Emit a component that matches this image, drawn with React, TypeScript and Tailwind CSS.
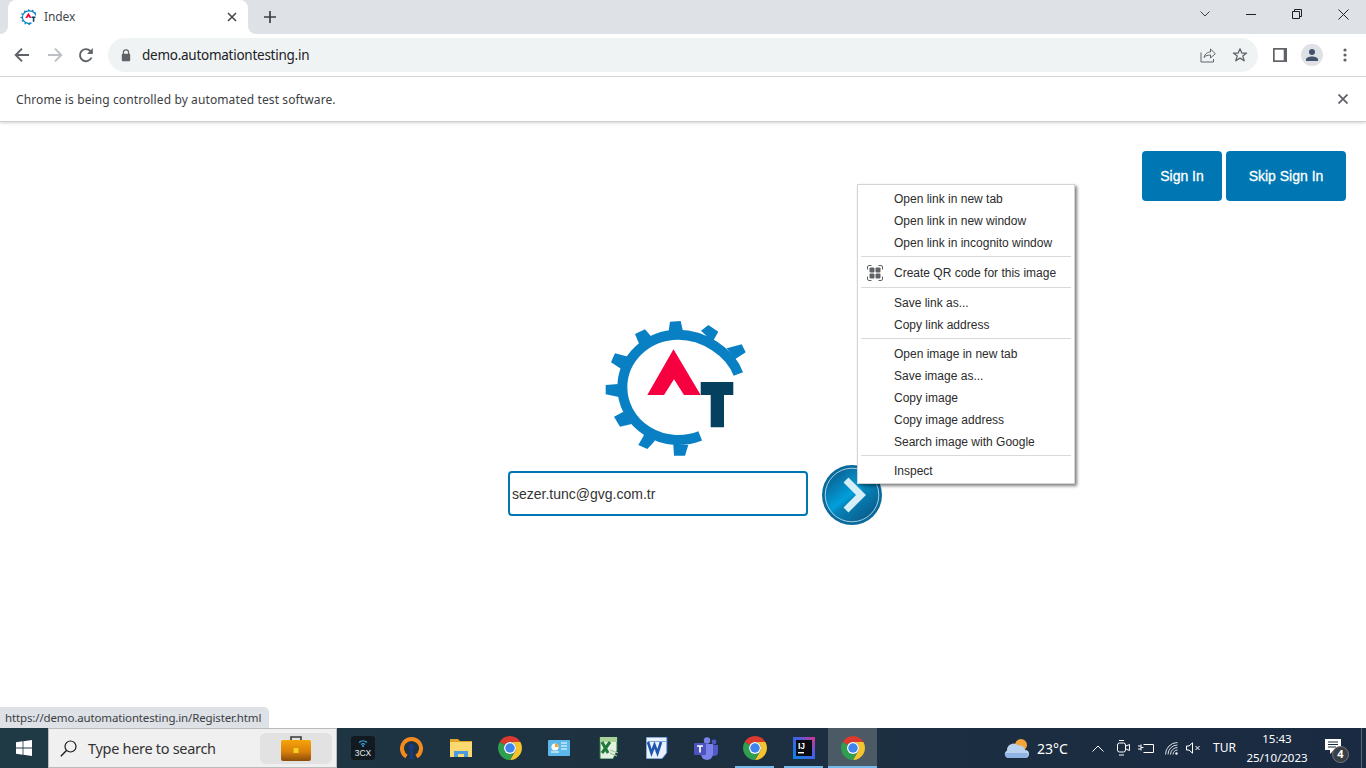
import React from "react";

const teeth = [
  "240,35 272,33 280,68 235,70",
  "333,62 355,45 385,65 368,95",
  "410,115 455,103 467,127 435,148",
  "135,72 165,58 188,85 150,108",
  "75,130 115,140 95,178 63,157",
  "47,225 85,222 90,262 47,253",
  "72,320 100,305 125,342 90,350",
  "145,405 165,370 195,392 172,417",
  "250,405 295,405 285,437 252,437",
];

function Logo({ className, viewBox }: { className: string; viewBox: string }) {
  return (
    <svg className={className} viewBox={viewBox}>
      <g transform="scale(0.33333)">
        <path d="M330.6 377.4A168 158 0 0 1 97 232A168 158 0 0 1 265 74C340 74 420 125 445 192" fill="none" stroke="#0a80c4" strokeWidth="30" />
        {teeth.map((p) => (
          <polygon key={p} points={p} fill="#0a80c4" />
        ))}
      </g>
      <polygon points="83.5,39.3 110.7,85 94,85 84,69.3 74,85 57.3,85" fill="#f6003f" />
      <polygon points="110.7,72 143.3,72 143.3,85 134,85 134,117.3 120.7,117.3 120.7,85 110.7,85" fill="#06405f" />
    </svg>
  );
}

function Chrome({ className = "w-6 h-6" }: { className?: string }) {
  return (
    <svg className={className} viewBox="0 0 48 48">
      <path d="M24 12H44.78A24 24 0 0 0 3.22 12L13.61 18A12 12 0 0 1 24 12Z" fill="#dd3a2e" />
      <path d="M24 12H44.78A24 24 0 0 1 24 48L34.39 30A12 12 0 0 0 24 12Z" fill="#f5c32c" />
      <path d="M3.22 12A24 24 0 0 0 24 48L34.39 30A12 12 0 0 1 13.61 18Z" fill="#2f9e4f" />
      <circle cx="24" cy="24" r="12" fill="#fff" />
      <circle cx="24" cy="24" r="9.5" fill="#3f83ec" />
    </svg>
  );
}

function Slot({ children, open, active }: { children: React.ReactNode; open?: boolean; active?: boolean }) {
  return (
    <div className={`relative w-[49px] h-10 flex items-center justify-center ${active ? "bg-[#4b5a65]" : ""}`}>
      {children}
      {open && <div className={`absolute bottom-0 h-[2px] bg-[#76b9ed] ${active ? "left-0 right-0" : "left-[5px] right-[5px]"}`} />}
    </div>
  );
}

function MenuItem({ children, icon }: { children: React.ReactNode; icon?: boolean }) {
  return (
    <div className="relative h-[22px] leading-[22px] pl-[36px] text-[12px] text-[#2b2b2b] whitespace-nowrap">
      {icon && (
        <svg className="absolute left-[9px] top-[3px] w-[16px] h-[16px]" viewBox="0 0 16 16">
          <path d="M0.5 4.5V2A1.5 1.5 0 0 1 2 0.5H4.5M11.5 0.5H14A1.5 1.5 0 0 1 15.5 2V4.5M15.5 11.5V14A1.5 1.5 0 0 1 14 15.5H11.5M4.5 15.5H2A1.5 1.5 0 0 1 0.5 14V11.5" fill="none" stroke="#5f6368" strokeWidth="1" />
          <rect x="2.5" y="2.5" width="5" height="5" rx="1" fill="#5f6368" />
          <rect x="8.5" y="2.5" width="5" height="5" rx="1" fill="#5f6368" />
          <rect x="2.5" y="8.5" width="5" height="5" rx="1" fill="#5f6368" />
          <rect x="8.5" y="8.5" width="5" height="5" rx="1" fill="#5f6368" />
        </svg>
      )}
      {children}
    </div>
  );
}

function Sep({ className }: { className: string }) {
  return <div className={`ml-[3px] mr-[3px] h-px bg-[#d9d9d9] ${className}`} />;
}

export default function App() {
  return (
    <div className="relative h-screen w-full overflow-hidden flex flex-col bg-white font-['Noto_Sans',sans-serif]">
      {/* Tab strip */}
      <div className="h-[34px] shrink-0 bg-[#dee1e6] flex items-start">
        <div className="relative ml-[8px] w-[240px] h-[34px] bg-white rounded-t-[8px] flex items-center pl-[12px] pr-[10px]">
          <svg className="absolute -left-[8px] bottom-0 w-2 h-2" viewBox="0 0 8 8"><path d="M8 0V8H0A8 8 0 0 0 8 0Z" fill="#fff" /></svg>
          <svg className="absolute -right-[8px] bottom-0 w-2 h-2" viewBox="0 0 8 8"><path d="M0 0V8H8A8 8 0 0 1 0 0Z" fill="#fff" /></svg>
          <Logo className="w-4 h-4 shrink-0" viewBox="12 8 136 136" />
          <span className="ml-2 text-[12px] text-[#45484d] tracking-[-0.01em]">Index</span>
          <svg className="ml-auto mr-[1px] w-[10px] h-[10px]" viewBox="0 0 10 10"><path d="M1 1L9 9M9 1L1 9" stroke="#45484d" strokeWidth="1.6" /></svg>
        </div>
        <svg className="ml-[16px] mt-[11px] w-[12px] h-[12px]" viewBox="0 0 12 12"><path d="M6 0V12M0 6H12" stroke="#3c4043" strokeWidth="1.7" /></svg>
        <div className="ml-auto flex items-center h-[28px] text-[#202124]">
          <svg className="w-[10px] h-[6px] mr-[36px]" viewBox="0 0 10 6"><path d="M0.5 0.5L5 5L9.5 0.5" fill="none" stroke="#3c4043" strokeWidth="1" /></svg>
          <svg className="w-[10px] h-[10px] mr-[36px]" viewBox="0 0 10 10"><path d="M0 5.5H10" stroke="#202124" strokeWidth="1" /></svg>
          <svg className="w-[10px] h-[10px] mr-[36px]" viewBox="0 0 10 10"><path d="M0.5 2.5H7.5V9.5H0.5ZM2.5 2.5V0.5H9.5V7.5H7.5" fill="none" stroke="#202124" strokeWidth="1" /></svg>
          <svg className="w-[11px] h-[11px] mr-[17px]" viewBox="0 0 11 11"><path d="M0.5 0.5L10.5 10.5M10.5 0.5L0.5 10.5" stroke="#202124" strokeWidth="1" /></svg>
        </div>
      </div>

      {/* Toolbar */}
      <div className="h-[42px] shrink-0 bg-white flex items-center border-b border-[#dadce0] box-content">
        <svg className="ml-[14px] w-4 h-4" viewBox="0 0 16 16"><path d="M15 8H2M8 1.7L1.7 8L8 14.3" fill="none" stroke="#5f6368" strokeWidth="1.9" /></svg>
        <svg className="ml-[17px] w-4 h-4" viewBox="0 0 16 16"><path d="M1 8H14M8 1.7L14.3 8L8 14.3" fill="none" stroke="#bcbfc3" strokeWidth="1.9" /></svg>
        <svg className="ml-[15px] w-4 h-4" viewBox="0 0 16 16"><path d="M13.5 10.5A6 6 0 1 1 12.3 4L14 5.6" fill="none" stroke="#5f6368" strokeWidth="1.9" /><path d="M14.8 1V7H9Z" fill="#5f6368" /></svg>
        <div className="ml-[14px] w-[1150px] h-[34px] rounded-full bg-[#f0f3f4] flex items-center pl-[13px] pr-[10px]">
          <svg className="w-[10px] h-[13px]" viewBox="0 0 10 13"><path d="M2.4 5V3.4A2.6 2.6 0 0 1 7.6 3.4V5" fill="none" stroke="#5f6368" strokeWidth="1.2" /><rect x="0.8" y="4.7" width="8.4" height="7.6" rx="1" fill="#5f6368" /></svg>
          <span className="ml-[11px] text-[13.5px] text-[#202124] tracking-[-0.26px]">demo.automationtesting.in</span>
          <svg className="ml-auto w-4 h-4" viewBox="0 0 16 16"><path d="M1 5.5V15H13.5V12M4 10.5C5 6.5 8 5 10.5 5V2L15.3 6.7L10.5 11V8C8 8 5.5 8.6 4 10.5Z" fill="none" stroke="#5f6368" strokeWidth="1" /></svg>
          <svg className="ml-4 w-4 h-4" viewBox="0 0 16 16"><path d="M8 1.8L9.8 6.1H14.6L10.8 9.1L12.2 13.8L8 11.1L3.8 13.8L5.2 9.1L1.4 6.1H6.2Z" fill="none" stroke="#5f6368" strokeWidth="1.3" strokeLinejoin="round" /></svg>
        </div>
        <svg className="ml-[15px] w-[14px] h-[14px]" viewBox="0 0 14 14"><rect width="14" height="14" fill="#5f6368" /><rect x="1.7" y="1.7" width="9" height="10.6" fill="#fff" /></svg>
        <div className="ml-[14px] w-[22px] h-[22px] rounded-full bg-[#dee1e6] flex items-center justify-center">
          <svg className="w-[14px] h-[14px]" viewBox="0 0 14 14"><circle cx="7" cy="4" r="3" fill="#45526b" /><path d="M1 13V11.5C1 9.5 4 8.5 7 8.5S13 9.5 13 11.5V13Z" fill="#45526b" /></svg>
        </div>
        <svg className="ml-[20px] w-1 h-[14px]" viewBox="0 0 4 14"><circle cx="2" cy="2" r="1.6" fill="#5f6368" /><circle cx="2" cy="7" r="1.6" fill="#5f6368" /><circle cx="2" cy="12" r="1.6" fill="#5f6368" /></svg>
      </div>

      {/* Infobar */}
      <div className="relative z-10 h-[45px] shrink-0 bg-white flex items-center pl-[16px] pr-[18px] border-b border-[#d0d0d0] shadow-[0_1px_3px_rgba(0,0,0,0.18)]">
        <span className="pt-[2px] text-[12px] text-[#3c4043] tracking-[0.11px]">Chrome is being controlled by automated test software.</span>
        <svg className="ml-auto w-[10px] h-[10px]" viewBox="0 0 10 10"><path d="M0.5 0.5L9.5 9.5M9.5 0.5L0.5 9.5" stroke="#5f6368" strokeWidth="1.8" /></svg>
      </div>

      {/* Page */}
      <div className="relative flex-1 min-h-0 bg-white font-['Liberation_Sans',sans-serif]">
        <div className="flex justify-end gap-1 pt-[29px] pr-[20px]">
          <div className="w-[80px] h-[50px] rounded-[4px] bg-[#0077b3] flex items-center justify-center text-[14px] text-white [-webkit-text-stroke:0.3px_white]">Sign In</div>
          <div className="w-[120px] h-[50px] rounded-[4px] bg-[#0077b3] flex items-center justify-center text-[14px] text-white [-webkit-text-stroke:0.3px_white]">Skip Sign In</div>
        </div>
        <Logo className="ml-[590px] mt-[109px] w-[170px] h-[155px] block" viewBox="0 0 170 155" />
        <div className="ml-[508px] flex items-start">
          <div className="mt-[6px] w-[300px] h-[45px] rounded-[4px] border-2 border-[#0077b3] flex items-center pl-[2px] pt-[2px] text-[14px] text-[#333333]">sezer.tunc@gvg.com.tr</div>
          <svg className="ml-[14px] w-[60px] h-[60px]" viewBox="0 0 60 60">
            <defs>
              <linearGradient id="orb" x1="0.2" y1="0.15" x2="0.8" y2="0.9">
                <stop offset="0" stopColor="#0a6a9e" />
                <stop offset="0.45" stopColor="#00a0dc" />
                <stop offset="0.55" stopColor="#0583b8" />
                <stop offset="1" stopColor="#0a5f90" />
              </linearGradient>
            </defs>
            <circle cx="30" cy="30" r="30" fill="#0b6a9c" />
            <circle cx="30" cy="30" r="26.8" fill="url(#orb)" stroke="#cfe8f3" strokeWidth="0.8" />
            <path d="M24 15L39 30L24 45" fill="none" stroke="#d6eef8" strokeWidth="7" />
          </svg>
        </div>

        {/* Context menu */}
        <div className="absolute left-[857px] top-[62px] w-[218px] h-[300px] bg-white border border-[#d4d4d4] shadow-[2px_2px_3px_rgba(0,0,0,0.5)] pt-[3px]">
          <MenuItem>Open link in new tab</MenuItem>
          <MenuItem>Open link in new window</MenuItem>
          <MenuItem>Open link in incognito window</MenuItem>
          <Sep className="mt-[2px] mb-[5px]" />
          <MenuItem icon>Create QR code for this image</MenuItem>
          <Sep className="mt-[3px] mb-[4px]" />
          <MenuItem>Save link as...</MenuItem>
          <MenuItem>Copy link address</MenuItem>
          <Sep className="mt-[2px] mb-[4px]" />
          <MenuItem>Open image in new tab</MenuItem>
          <MenuItem>Save image as...</MenuItem>
          <MenuItem>Copy image</MenuItem>
          <MenuItem>Copy image address</MenuItem>
          <MenuItem>Search image with Google</MenuItem>
          <Sep className="mt-[2px] mb-[4px]" />
          <MenuItem>Inspect</MenuItem>
        </div>

        {/* Status bubble */}
        <div className="absolute left-0 bottom-0 w-[269px] h-[21px] bg-[#dee1e6] rounded-tr-[5px] pl-[5px] leading-[21px] text-[11.5px] text-[#3c4043] tracking-[-0.012em] whitespace-nowrap font-['Noto_Sans',sans-serif]">https://demo.automationtesting.in/Register.html</div>
      </div>

      {/* Taskbar */}
      <div className="h-10 shrink-0 flex items-center bg-linear-to-r from-[#203a45] via-[#1d3040] to-[#1a2a42] text-white">
        <div className="w-[48px] h-10 flex items-center justify-center">
          <svg className="w-4 h-4" viewBox="0 0 16 16"><path d="M0 2.3L6.6 1.3V7.6H0ZM7.4 1.2L16 0V7.6H7.4ZM0 8.4H6.6V14.7L0 13.7ZM7.4 8.4H16V16L7.4 14.8Z" fill="#fff" /></svg>
        </div>
        <div className="w-[289px] h-10 bg-[#f0f0f0] border border-[#b8bcbf] flex items-center text-[#2b2b2b]">
          <svg className="ml-[11px] w-[17px] h-[17px]" viewBox="0 0 17 17"><circle cx="10.5" cy="6.5" r="5.5" fill="none" stroke="#1b1b1b" strokeWidth="1.2" /><path d="M6.5 10.5L0.8 16.2" stroke="#1b1b1b" strokeWidth="1.4" /></svg>
          <span className="ml-[11px] pt-[2px] text-[14.5px] tracking-[-0.3px] whitespace-nowrap text-[#333]">Type here to search</span>
          <div className="ml-auto mr-[4px] w-[72px] h-[31px] rounded-[6px] bg-[#e2e2e2] flex items-center justify-center">
            <svg className="w-[30px] h-[26px]" viewBox="0 0 30 26">
              <defs><linearGradient id="case" x1="0" y1="0" x2="0" y2="1"><stop offset="0" stopColor="#f7a30a" /><stop offset="0.55" stopColor="#d9810a" /><stop offset="1" stopColor="#8a4d08" /></linearGradient></defs>
              <path d="M10 5V2H20V5" fill="none" stroke="#3a3a3a" strokeWidth="1.6" />
              <rect x="0" y="5" width="30" height="21" rx="2" fill="url(#case)" />
              <rect x="12.5" y="13" width="5" height="5" fill="#f5d020" />
            </svg>
          </div>
        </div>

        <div className="ml-[1px] flex items-center">
          <Slot>
            <svg className="w-6 h-6" viewBox="0 0 24 24">
              <rect width="24" height="24" rx="3" fill="#111a20" />
              <path d="M8 6.5A6 6 0 0 1 16 6.5M10 8.5A3 3 0 0 1 14 8.5" fill="none" stroke="#38a3d8" strokeWidth="1.2" />
              <circle cx="12" cy="10" r="1" fill="#38a3d8" />
              <text x="12" y="20" textAnchor="middle" fontSize="8.5" fill="#e8eef2" fontFamily="Liberation Sans">3CX</text>
            </svg>
          </Slot>
          <Slot>
            <svg className="w-[23px] h-[24px]" viewBox="0 0 23 24">
              <path d="M6.5 20.5A9.5 9.5 0 1 1 16.5 20.5" fill="none" stroke="#f58a1f" strokeWidth="4" />
              <circle cx="11.5" cy="11" r="3" fill="#1c3a80" />
              <path d="M10.3 12H12.7L13.5 23H9.5Z" fill="#1c3a80" />
            </svg>
          </Slot>
          <Slot>
            <svg className="w-[22px] h-[18px]" viewBox="0 0 22 18">
              <path d="M0 0H8L10 2H22V5H0Z" fill="#e0a526" />
              <rect y="3" width="22" height="15" fill="#fbd971" />
              <path d="M4 18V12H18V18H14V15H8V18Z" fill="#4a9be0" />
            </svg>
          </Slot>
          <Slot><Chrome /></Slot>
          <Slot>
            <svg className="w-[22px] h-[16px]" viewBox="0 0 22 16">
              <rect width="22" height="16" rx="1" fill="#5cb8ea" />
              <circle cx="7" cy="7" r="3.6" fill="#fff" />
              <path d="M7 7V3.4A3.6 3.6 0 0 1 10.6 7Z" fill="#f5a623" />
              <path d="M13 3H19M13 6H19M13 9H19M3 12H11" stroke="#fff" strokeWidth="1.2" />
            </svg>
          </Slot>
          <Slot>
            <svg className="w-[22px] h-[22px]" viewBox="0 0 22 22">
              <path d="M3 0H20V14L16 22H3Z" fill="#e4f1e2" stroke="#1f7a3a" />
              <path d="M3 0H20V5H3Z" fill="#a9d29a" />
              <path d="M5 5L11 16M13 5L5 16" stroke="#1f7a3a" strokeWidth="3" />
              <path d="M13 13L21 16M13 16L20 19" stroke="#9bbf96" strokeWidth="1.2" />
            </svg>
          </Slot>
          <Slot>
            <svg className="w-[22px] h-[22px]" viewBox="0 0 22 22">
              <path d="M0 0H21V16L16 22H0Z" fill="#e8f0fa" stroke="#2a62b8" />
              <path d="M2 4H20V5H2Z" fill="#7ea6dc" />
              <path d="M2 5L5.5 16L8.5 8L11.5 16L15 5" fill="none" stroke="#1f56ad" strokeWidth="2.6" />
            </svg>
          </Slot>
          <Slot>
            <svg className="w-6 h-[23px]" viewBox="0 0 24 23">
              <circle cx="13" cy="3.5" r="3.2" fill="#7b83eb" />
              <circle cx="20" cy="5" r="2.4" fill="#5059c9" />
              <path d="M16 8H24V15A4 4 0 0 1 16 15Z" fill="#5059c9" />
              <path d="M7 7H19V17A6 6 0 0 1 7 17Z" fill="#7b83eb" />
              <rect x="0" y="6" width="12" height="12" rx="1.2" fill="#4b53bc" />
              <path d="M3 9H9M6 9V15.5" stroke="#fff" strokeWidth="1.7" />
            </svg>
          </Slot>
          <Slot open><Chrome /></Slot>
          <Slot open>
            <svg className="w-[22px] h-[22px]" viewBox="0 0 22 22">
              <defs><linearGradient id="ij" x1="0" y1="1" x2="1" y2="0"><stop offset="0" stopColor="#0a84e8" /><stop offset="0.6" stopColor="#4a5ce0" /><stop offset="1" stopColor="#e0318a" /></linearGradient></defs>
              <rect width="22" height="22" fill="url(#ij)" />
              <rect x="3" y="3" width="16" height="16" fill="#0b0b12" />
              <text x="5" y="11.5" fontSize="8.5" fontWeight="bold" fill="#fff" fontFamily="Liberation Sans">IJ</text>
              <rect x="5" y="15" width="6" height="1.4" fill="#fff" />
            </svg>
          </Slot>
          <Slot open active><Chrome /></Slot>
        </div>

        <svg className="ml-[127px] w-[25px] h-[23px]" viewBox="0 0 25 23">
          <circle cx="17" cy="8" r="6" fill="#f2a43a" />
          <path d="M4 21A4 4 0 0 1 3 13.5A6.5 6.5 0 0 1 14 8.5A5.5 5.5 0 0 1 21 13A4 4 0 0 1 21 21Z" fill="#b9d2f0" />
          <path d="M4 21A3 3 0 0 1 2 16H23A3 3 0 0 1 21 21Z" fill="#8fb4e4" />
        </svg>
        <span className="ml-[8px] text-[14px] w-[45px] whitespace-nowrap">23°C</span>
        <svg className="ml-[10px] w-[12px] h-[7px]" viewBox="0 0 12 7"><path d="M0.5 6.5L6 1L11.5 6.5" fill="none" stroke="#fff" strokeWidth="1" /></svg>
        <svg className="ml-[13px] w-[13px] h-[18px]" viewBox="0 0 13 18" fill="none" stroke="#fff" strokeWidth="1"><rect x="0.5" y="4" width="8" height="9" rx="2" /><path d="M9 7L12.5 5.5V11.5L9 10M2 1.5H7M2 16H7" /></svg>
        <svg className="ml-[8px] w-[16px] h-[11px]" viewBox="0 0 16 11" fill="none" stroke="#fff" strokeWidth="1"><path d="M5.5 1.5H15.5V9.5H5.5M0 3H3M0 6H3M3 1.5V7.5M3 4.5H5.5" /></svg>
        <svg className="ml-[11px] w-[13px] h-[13px]" viewBox="0 0 13 13" fill="none" stroke="#d9dee3" strokeWidth="1"><path d="M0.5 12.5A12 12 0 0 1 12.5 0.5M3 12.5A9.5 9.5 0 0 1 12.5 3M5.5 12.5A7 7 0 0 1 12.5 5.5M8 12.5A4.5 4.5 0 0 1 12.5 8" /><circle cx="11.5" cy="11.5" r="1.2" fill="#fff" stroke="none" /></svg>
        <svg className="ml-[8px] w-[15px] h-[12px]" viewBox="0 0 15 12" fill="none" stroke="#fff" strokeWidth="1"><path d="M0.5 4H3L6.5 0.8V11.2L3 8H0.5ZM9.5 4L13.5 8M13.5 4L9.5 8" /></svg>
        <span className="ml-[12px] text-[12px] w-[26px] whitespace-nowrap">TUR</span>
        <div className="ml-[2px] w-[72px] flex flex-col items-center text-[11.5px] leading-[19px] whitespace-nowrap">
          <span>15:43</span>
          <span>25/10/2023</span>
        </div>
        <div className="relative ml-[12px] mt-[6px] w-[25px] h-[25px]">
          <svg className="absolute left-0 top-0 w-[16px] h-[15px]" viewBox="0 0 16 15"><path d="M0 0H16V11H9L5 15V11H0Z" fill="#fff" /><path d="M3 3H13M3 5.5H13M3 8H11" stroke="#1b2b40" strokeWidth="1" /></svg>
          <div className="absolute left-[7px] top-[7px] w-[17px] h-[17px] rounded-full bg-[#3a3f45] border border-[#777] flex items-center justify-center text-[11px] font-bold text-white">4</div>
        </div>
        <div className="ml-auto mr-[4px] w-px h-10 bg-[#5a6672]" />
      </div>
    </div>
  );
}
